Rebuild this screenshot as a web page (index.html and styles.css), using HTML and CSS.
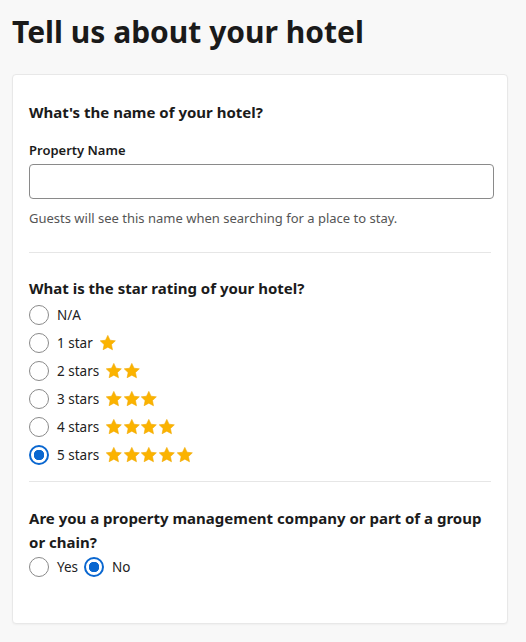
FILE: index.html
```html
<!DOCTYPE html>
<html lang="en">
<head>
  <meta charset="UTF-8">
  <meta name="viewport" content="width=device-width, initial-scale=1.0">
  <title>Tell us about your hotel</title>
  <link rel="stylesheet" href="styles.css">
</head>
<body>
  <!-- Estrela reutilizada -->
  <svg class="defs" aria-hidden="true">
    <symbol id="star" viewBox="0 0 24 24">
      <path d="M12 1.6l3.1 6.6 7.2.9-5.3 5 1.4 7.1L12 17.7l-6.4 3.5L7 14.1l-5.3-5 7.2-.9z" stroke-linejoin="round"/>
    </symbol>
  </svg>

  <h1 class="page-title">Tell us about your hotel</h1>

  <form class="card">
    <!-- Nome -->
    <section class="section name-section">
      <h2 class="question">What's the name of your hotel?</h2>
      <label class="field-label" for="propertyName">Property Name</label>
      <input class="text-input" type="text" id="propertyName">
      <p class="hint">Guests will see this name when searching for a place to stay.</p>
    </section>

    <!-- Estrelas -->
    <section class="section rating-section">
      <h2 class="question">What is the star rating of your hotel?</h2>
      <label class="radio-row"><input type="radio" name="rating" value="0"><span>N/A</span></label>
      <label class="radio-row"><input type="radio" name="rating" value="1"><span>1 star</span>
        <span class="stars"><svg><use href="#star"/></svg></span></label>
      <label class="radio-row"><input type="radio" name="rating" value="2"><span>2 stars</span>
        <span class="stars"><svg><use href="#star"/></svg><svg><use href="#star"/></svg></span></label>
      <label class="radio-row"><input type="radio" name="rating" value="3"><span>3 stars</span>
        <span class="stars"><svg><use href="#star"/></svg><svg><use href="#star"/></svg><svg><use href="#star"/></svg></span></label>
      <label class="radio-row"><input type="radio" name="rating" value="4"><span>4 stars</span>
        <span class="stars"><svg><use href="#star"/></svg><svg><use href="#star"/></svg><svg><use href="#star"/></svg><svg><use href="#star"/></svg></span></label>
      <label class="radio-row"><input type="radio" name="rating" value="5" checked><span>5 stars</span>
        <span class="stars"><svg><use href="#star"/></svg><svg><use href="#star"/></svg><svg><use href="#star"/></svg><svg><use href="#star"/></svg><svg><use href="#star"/></svg></span></label>
    </section>

    <!-- Grupo -->
    <section class="section chain-section">
      <h2 class="question">Are you a property management company or part of a group or chain?</h2>
      <div class="inline-radios">
        <label class="radio-row"><input type="radio" name="chain" value="yes"><span>Yes</span></label>
        <label class="radio-row"><input type="radio" name="chain" value="no" checked><span>No</span></label>
      </div>
    </section>
  </form>
</body>
</html>
```

FILE: styles.css
```css
/* Geral */
body {
  margin: 0;
  padding: 12px 18px 16px 12px;
  background: #f8f8f8;
  color: #1b1b1b;
  font-family: "Noto Sans", "Open Sans", Arial, sans-serif;
}

.defs {
  display: none;
}

.page-title {
  margin: 0 0 22px;
  font-size: 30px;
  line-height: 40px;
  font-weight: 700;
  color: #1a1a1a;
}

/* Card */
.card {
  background: #fff;
  border: 1px solid #e8e8e8;
  border-radius: 4px;
  box-shadow: 0 1px 2px rgba(0, 0, 0, 0.04);
  padding: 25px 16px 43px;
}

.section {
  border-bottom: 1px solid #e6e6e6;
}

.name-section {
  padding-bottom: 24px;
}

.rating-section {
  padding-top: 23px;
  padding-bottom: 12px;
}

.chain-section {
  padding-top: 24px;
  border-bottom: none;
}

.question {
  margin: 0;
  font-size: 15px;
  line-height: 24px;
  font-weight: 700;
}

.name-section .question {
  margin-bottom: 16px;
}

.rating-section .question {
  margin-bottom: 1px;
}

.field-label {
  display: block;
  font-size: 13px;
  font-weight: 600;
  line-height: 20px;
  margin-bottom: 4px;
}

.text-input {
  display: block;
  width: calc(100% + 3px);
  height: 35px;
  box-sizing: border-box;
  border: 1px solid #8a8a8a;
  border-radius: 4px;
  padding: 0 10px;
  font: inherit;
}

.hint {
  margin: 9px 0 0;
  font-size: 13px;
  line-height: 20px;
  color: #555;
}

/* Radios */
.radio-row {
  display: flex;
  align-items: center;
  height: 28px;
  font-size: 13.5px;
  color: #222;
}

.radio-row input {
  appearance: none;
  flex: none;
  width: 20px;
  height: 20px;
  margin: 0 8px 0 0;
  border: 1px solid #8a8a8a;
  border-radius: 50%;
  box-sizing: border-box;
  background: #fff;
}

.radio-row input:checked {
  border: 2px solid #0a67d0;
  background: radial-gradient(circle, #0a67d0 0 5px, #fff 5.5px);
}

.stars {
  display: flex;
  margin-left: 6px;
}

.stars svg {
  width: 17.6px;
  height: 18px;
  fill: #fbb300;
  stroke: #f2a900;
  stroke-width: 0.8;
}

.inline-radios {
  display: flex;
  gap: 6px;
}

.inline-radios .radio-row {
  height: 26px;
}
```
